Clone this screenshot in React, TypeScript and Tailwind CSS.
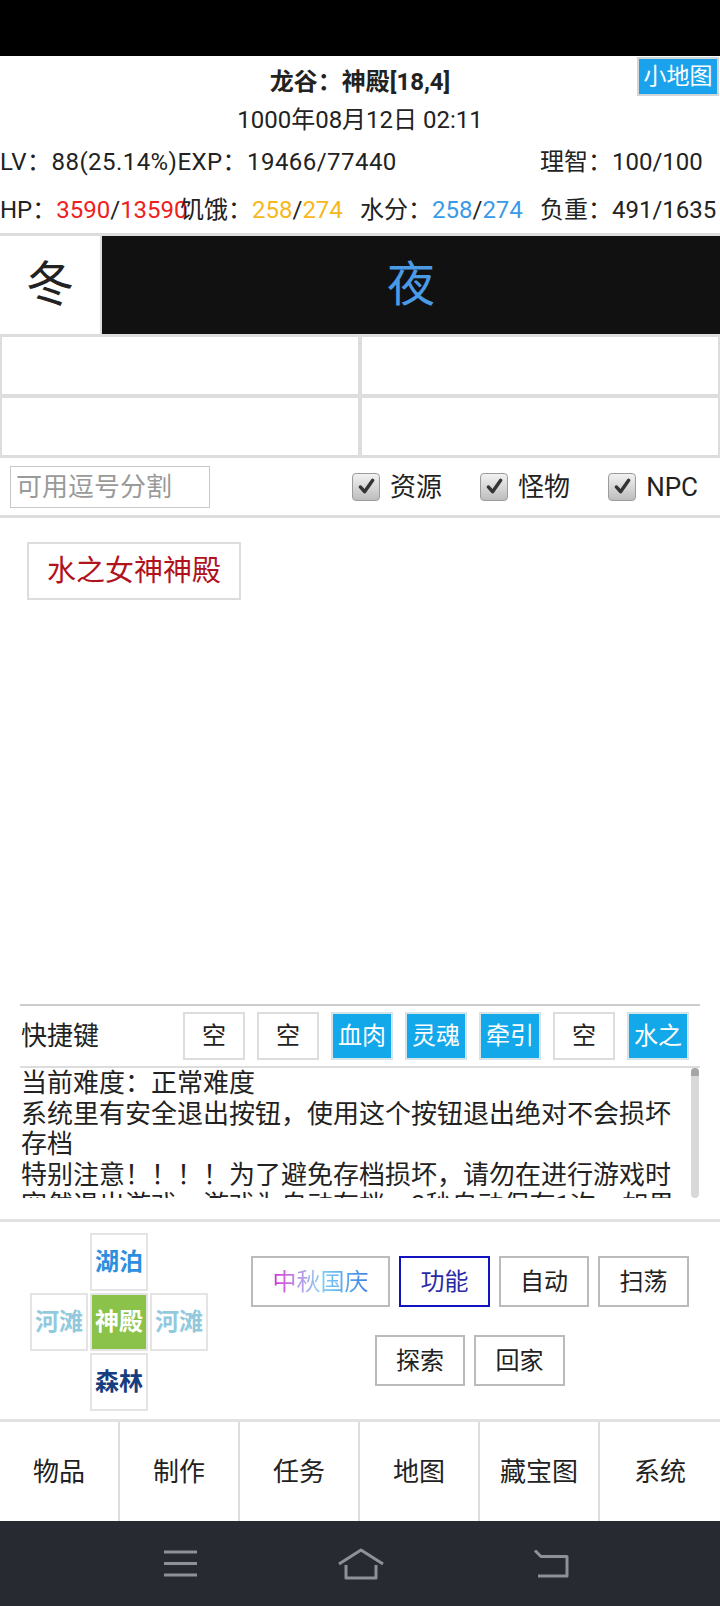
import React from 'react';

const shortcuts: { label: string; active: boolean }[] = [
  { label: '空', active: false },
  { label: '空', active: false },
  { label: '血肉', active: true },
  { label: '灵魂', active: true },
  { label: '牵引', active: true },
  { label: '空', active: false },
  { label: '水之', active: true },
];

const tabs = ['物品', '制作', '任务', '地图', '藏宝图', '系统'];

function CheckBox({ label }: { label: string }) {
  return (
    <label className="flex items-center gap-[10px]">
      <span className="w-[28px] h-[28px] rounded-[4px] border border-[#9c9c9c] bg-gradient-to-b from-[#f2f2f2] to-[#bdbdbd] flex items-center justify-center">
        <svg width="19" height="19" viewBox="0 0 20 20">
          <path d="M3.5 10.5 L8 15.5 L16.5 3.5" fill="none" stroke="#333333" strokeWidth="3.6" strokeLinecap="round" strokeLinejoin="round" />
        </svg>
      </span>
      <span className="text-[26px] leading-none">{label}</span>
    </label>
  );
}

export default function App() {
  return (
    <div className="w-[720px] h-[1606px] overflow-hidden bg-white text-[#222222] font-[Roboto,'Noto_Sans_CJK_SC',sans-serif] flex flex-col">
      {/* status bar */}
      <div className="h-[56px] shrink-0 bg-black" />

      {/* header */}
      <div className="relative shrink-0">
        <div className="h-[52px] flex items-center justify-center text-[24px] font-bold">龙谷：神殿[18,4]</div>
        <button className="absolute right-[1px] top-[1px] w-[82px] h-[39px] bg-[#1aa3ec] border-2 border-[#d0d6da] text-white text-[23px] leading-none flex items-center justify-center">
          小地图
        </button>
        <div className="h-[24px] flex items-center justify-center text-[24px] leading-none">1000年08月12日 02:11</div>
        <div className="h-[60px] grid grid-cols-4 items-center text-[24px] whitespace-nowrap">
          <div className="col-span-3 tracking-[0.45px]">LV：88(25.14%)EXP：19466/77440</div>
          <div>理智：100/100</div>
        </div>
        <div className="h-[36px] grid grid-cols-4 items-center text-[24px] whitespace-nowrap">
          <div>
            HP：<span className="text-[#ee2020]">3590</span>/<span className="text-[#ee2020]">13590</span>
          </div>
          <div>
            饥饿：<span className="text-[#f6b81a]">258</span>/<span className="text-[#f6b81a]">274</span>
          </div>
          <div>
            水分：<span className="text-[#3b9ae8]">258</span>/<span className="text-[#3b9ae8]">274</span>
          </div>
          <div>负重：491/1635</div>
        </div>
      </div>

      {/* season / time + empty slots */}
      <div className="mt-[5px] shrink-0 bg-[#dddddd] pt-[3px] pb-[3px]">
        <div className="h-[98px] flex gap-[2px]">
          <div className="w-[100px] bg-white flex items-center justify-center text-[48px] leading-none">冬</div>
          <div className="flex-1 bg-[#111111] flex items-center justify-center text-[48px] leading-none text-[#4a9ae6]">夜</div>
        </div>
        <div className="mt-[3px] px-[2px] grid grid-cols-2 gap-[4px]">
          <div className="h-[57px] bg-white" />
          <div className="h-[57px] bg-white" />
          <div className="h-[57px] bg-white" />
          <div className="h-[57px] bg-white" />
        </div>
      </div>

      {/* filter row */}
      <div className="h-[57px] shrink-0 flex items-center border-b-[3px] border-[#dddddd] box-content">
        <input
          className="ml-[10px] w-[200px] h-[42px] border border-[#c8c8c8] px-[5px] text-[26px] placeholder:text-[#9a9a9a] outline-none"
          placeholder="可用逗号分割"
        />
        <div className="ml-auto pr-[22px] flex items-center gap-[38px]">
          <CheckBox label="资源" />
          <CheckBox label="怪物" />
          <CheckBox label="NPC" />
        </div>
      </div>

      {/* targets */}
      <div className="h-[486px] shrink-0 pt-[24px] pl-[27px]">
        <button className="w-[214px] h-[58px] border-2 border-[#dddddd] text-[29px] leading-none text-[#b0131d]">水之女神神殿</button>
      </div>

      {/* shortcuts */}
      <div className="mx-[20px] shrink-0 border-t-2 border-[#cccccc]">
        <div className="h-[60px] flex items-center">
          <div className="w-[163px] pl-[1px] text-[26px] leading-none">快捷键</div>
          <div className="flex gap-[12px]">
            {shortcuts.map((s, i) => (
              <button
                key={i}
                className={`w-[62px] h-[48px] border-2 text-[24px] leading-none flex items-center justify-center ${
                  s.active ? 'bg-[#12a8ea] border-[#d6e4ea] text-white' : 'bg-white border-[#dddddd] text-[#222222]'
                }`}
              >
                {s.label}
              </button>
            ))}
          </div>
        </div>
        {/* log */}
        <div className="relative h-[132px] border-t-2 border-[#dddddd] overflow-hidden">
          <div className="pl-[1px] pr-[10px] text-[26px] leading-[30.5px]">
            <p>当前难度：正常难度</p>
            <p>系统里有安全退出按钮，使用这个按钮退出绝对不会损坏存档</p>
            <p>特别注意！！！！为了避免存档损坏，请勿在进行游戏时突然退出游戏，游戏为自动存档，3秒自动保存1次，如果在保存时退出可能会损坏存档</p>
          </div>
          <div className="absolute right-[1px] top-0 bottom-0 w-[8px] rounded-full bg-[#d8d8d8] overflow-hidden">
            <div className="h-[8px] bg-[#a6a6a6]" />
          </div>
        </div>
      </div>

      <div className="h-[21px] shrink-0" />
      <div className="h-[3px] shrink-0 bg-[#e2e2e2]" />

      {/* controls */}
      <div className="h-[197px] shrink-0 flex">
        <div className="w-[240px] pl-[30px] pt-[11px]">
          <div className="grid grid-cols-[58px_58px_58px] grid-rows-[58px_58px_58px] gap-[2px] text-[24px] font-bold leading-none">
            <div />
            <div className="border-2 border-[#e4e4e4] flex items-center justify-center text-[#2d8ee0]">湖泊</div>
            <div />
            <div className="border-2 border-[#e4e4e4] flex items-center justify-center text-[#93c9dd]">河滩</div>
            <div className="border-2 border-[#e4e4e4] bg-[#8bc34a] flex items-center justify-center text-white">神殿</div>
            <div className="border-2 border-[#e4e4e4] flex items-center justify-center text-[#93c9dd]">河滩</div>
            <div />
            <div className="border-2 border-[#e4e4e4] flex items-center justify-center text-[#163d80]">森林</div>
            <div />
          </div>
        </div>
        <div className="flex-1 mr-[20px] pt-[34px] flex flex-col items-center gap-[28px] text-[24px] leading-none">
          <div className="flex gap-[9px]">
            <button className="w-[139px] h-[51px] border-2 border-[#bbbbbb] flex items-center justify-center">
              <span className="bg-gradient-to-r from-[#d41ed6] via-[#7fd0f2] to-[#3d7fe6] bg-clip-text text-transparent">中秋国庆</span>
            </button>
            <button className="w-[91px] h-[51px] border-2 border-[#1212c0] text-[#2a2aa6] flex items-center justify-center">功能</button>
            <button className="w-[90px] h-[51px] border-2 border-[#bbbbbb] flex items-center justify-center">自动</button>
            <button className="w-[91px] h-[51px] border-2 border-[#bbbbbb] flex items-center justify-center">扫荡</button>
          </div>
          <div className="flex gap-[9px]">
            <button className="w-[90px] h-[51px] border-2 border-[#bbbbbb] flex items-center justify-center">探索</button>
            <button className="w-[91px] h-[51px] border-2 border-[#bbbbbb] flex items-center justify-center">回家</button>
          </div>
        </div>
      </div>

      {/* bottom menu */}
      <div className="h-[3px] shrink-0 bg-[#e2e2e2]" />
      <div className="h-[99px] shrink-0 grid grid-cols-6">
        {tabs.map((t, i) => (
          <div
            key={t}
            className={`flex items-center justify-center text-[26px] leading-none ${i < 5 ? 'border-r-2 border-[#dddddd]' : ''}`}
          >
            {t}
          </div>
        ))}
      </div>

      {/* android nav */}
      <div className="h-[85px] shrink-0 bg-[#272a31] flex items-center">
        <svg className="ml-[164px]" width="33" height="27" viewBox="0 0 33 27">
          <path d="M0 2h33M0 13.5h33M0 25h33" stroke="#8e9196" strokeWidth="3" />
        </svg>
        <svg className="ml-[140px]" width="48" height="32" viewBox="0 0 48 32">
          <path d="M2 16 L24 2 L46 16" fill="none" stroke="#8e9196" strokeWidth="3" strokeLinejoin="round" />
          <path d="M9 17 V30 H39 V17" fill="none" stroke="#8e9196" strokeWidth="3" strokeLinejoin="round" />
        </svg>
        <svg className="ml-[148px]" width="36" height="29" viewBox="0 0 36 29">
          <path d="M2 1.5 L8 7.5 H34 V27 H5" fill="none" stroke="#8e9196" strokeWidth="3" strokeLinejoin="round" />
        </svg>
      </div>
    </div>
  );
}
